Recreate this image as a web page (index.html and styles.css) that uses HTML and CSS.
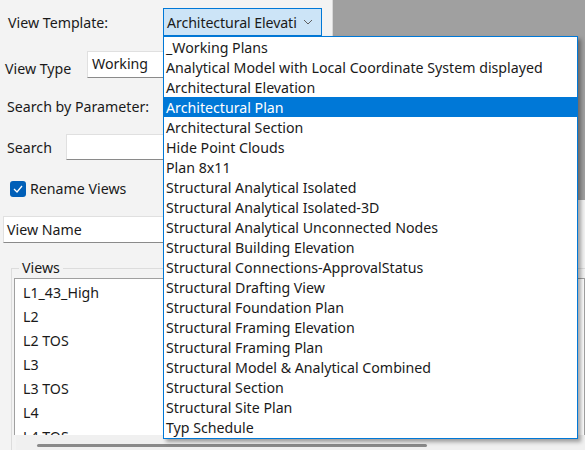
FILE: index.html
```html
<!DOCTYPE html>
<html lang="en">
<head>
  <meta charset="UTF-8" />
  <title>Rename Views</title>
  <link rel="stylesheet" href="styles.css">
</head>
<body>
  <div class="window">
    <div class="top">
      <div class="form">
        <div class="row row-template">
          <span class="lbl">View Template:</span>
          <div class="combo">
            <span class="combo-text">Architectural Elevati</span>
            <svg class="chev" width="10" height="6" viewBox="0 0 10 6"><path d="M1 1 L5 5 L9 1" fill="none" stroke="#606060" stroke-width="1"/></svg>
          </div>
        </div>
        <div class="row row-type">
          <span class="lbl">View Type</span>
          <div class="field">Working</div>
        </div>
        <div class="row row-param">
          <span class="lbl">Search by Parameter:</span>
        </div>
        <div class="row row-search">
          <span class="lbl">Search</span>
          <div class="field"></div>
        </div>
        <div class="row row-check">
          <span class="check">
            <svg width="10" height="8" viewBox="0 0 10 8"><path d="M1 4 L4 7 L9 1" fill="none" stroke="#fff" stroke-width="1.3"/></svg>
          </span>
          <span class="lbl">Rename Views</span>
        </div>
      </div>
      <div class="preview"></div>
    </div>

    <div class="field name-field">View Name</div>

    <fieldset class="views">
      <legend>Views</legend>
      <div class="listbox">
        <div class="item">L1_43_High</div>
        <div class="item">L2</div>
        <div class="item">L2 TOS</div>
        <div class="item">L3</div>
        <div class="item">L3 TOS</div>
        <div class="item">L4</div>
        <div class="item">L4 TOS</div>
      </div>
      <div class="hscroll"><div class="thumb"></div></div>
    </fieldset>
  </div>

  <ul class="popup">
    <li>_Working Plans</li>
    <li>Analytical Model with Local Coordinate System displayed</li>
    <li>Architectural Elevation</li>
    <li class="sel">Architectural Plan</li>
    <li>Architectural Section</li>
    <li>Hide Point Clouds</li>
    <li>Plan 8x11</li>
    <li>Structural Analytical Isolated</li>
    <li>Structural Analytical Isolated-3D</li>
    <li>Structural Analytical Unconnected Nodes</li>
    <li>Structural Building Elevation</li>
    <li>Structural Connections-ApprovalStatus</li>
    <li>Structural Drafting View</li>
    <li>Structural Foundation Plan</li>
    <li>Structural Framing Elevation</li>
    <li>Structural Framing Plan</li>
    <li>Structural Model &amp; Analytical Combined</li>
    <li>Structural Section</li>
    <li>Structural Site Plan</li>
    <li>Typ Schedule</li>
  </ul>
</body>
</html>
```

FILE: styles.css
```css
* { box-sizing: border-box; margin: 0; padding: 0; }

body {
  font-family: 'Noto Sans', sans-serif;
  font-size: 14.2px;
  color: #1a1a1a;
  background: #f3f3f3;
  width: 585px;
  height: 450px;
  overflow: hidden;
  position: relative;
}

.window {
  display: flex;
  flex-direction: column;
}

.top {
  display: flex;
}

.form {
  width: 333px;
  flex: none;
  border-right: 1px solid #d8d8d8;
}

.preview {
  flex: 1;
  height: 200px;
  background: #a0a0a0;
}

.row {
  display: flex;
  align-items: center;
}

.lbl { white-space: nowrap; }

.row-template {
  height: 28px;
  margin-top: 8px;
  padding-left: 8px;
}

.row-template .lbl { width: 155px; }

.combo {
  width: 159px;
  height: 28px;
  background: #cce4f7;
  border: 1px solid #0078d7;
  display: flex;
  align-items: center;
  padding: 0 8px 0 3px;
}

.combo-text {
  flex: 1;
  white-space: nowrap;
  letter-spacing: -0.1px;
}

.chev { flex: none; margin-left: 2px; }

.field {
  background: #fff;
  border: 1px solid #e0e0e0;
  border-bottom-color: #8a8a8a;
  height: 27px;
  display: flex;
  align-items: center;
  padding-left: 4px;
}

.row-type {
  margin-top: 15px;
  padding-left: 5px;
  height: 27px;
}

.row-type .lbl { width: 82px; padding-top: 7px; }
.row-type .field { flex: 1; align-items: flex-start; padding-top: 2px; }

.row-param {
  margin-top: 15px;
  padding-left: 7px;
  height: 27px;
}

.row-search {
  margin-top: 14px;
  padding-left: 7px;
  height: 26px;
}

.row-search .lbl { width: 59px; }
.row-search .field { flex: 1; height: 26px; }

.row-check {
  margin-top: 20px;
  padding-left: 10px;
  height: 17px;
  margin-bottom: 19px;
}

.check {
  width: 16px;
  height: 16px;
  border-radius: 3px;
  background: #005fb8;
  display: flex;
  align-items: center;
  justify-content: center;
  margin-right: 4px;
}

.name-field {
  margin: 0 0 0 3px;
  height: 27px;
  width: 575px;
  padding-left: 3px;
}

.views {
  margin: 17px 0 0 11px;
  border: 1px solid #dcdcdc;
  border-right: none;
  border-bottom: none;
  padding: 2px 0 0 2px;
}

.views legend {
  margin-left: 5px;
  padding: 0 3px;
  line-height: 16px;
}

.listbox {
  background: #fff;
  border: 1px solid #a0a0a0;
  border-bottom: none;
  height: 157px;
  padding: 2px 0 0 8px;
  overflow: hidden;
}

.item {
  height: 24px;
  line-height: 24px;
}

.hscroll {
  height: 20px;
  background: #f0f0f0;
  margin-left: 2px;
  padding: 9px 0 0 21px;
}

.thumb {
  width: 390px;
  height: 3px;
  background: #8a8a8a;
  border-radius: 2px;
}

.popup {
  position: absolute;
  left: 163px;
  top: 36px;
  width: 415px;
  list-style: none;
  background: #fff;
  border: 1px solid #0078d7;
  box-shadow: 3px 3px 4px rgba(0, 0, 0, 0.35);
  padding-bottom: 1px;
}

.popup li {
  height: 20px;
  line-height: 21px;
  padding-left: 2px;
  white-space: nowrap;
}

.popup li.sel {
  background: #0078d7;
  color: #fff;
}
```
